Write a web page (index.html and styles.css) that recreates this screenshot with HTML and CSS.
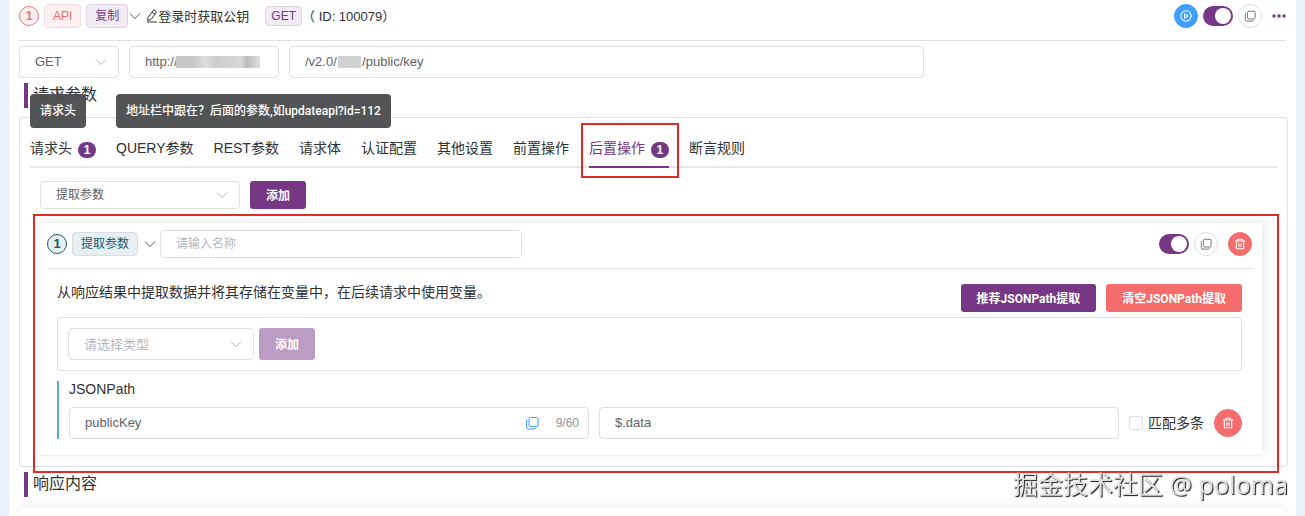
FILE: index.html
```
<!DOCTYPE html>
<html lang="zh-CN">
<head>
    <meta charset="UTF-8">
    <meta name="viewport" content="width=device-width, initial-scale=1.0">
    <title>登录时获取公钥</title>
    <link rel="stylesheet" href="styles.css">
</head>
<body>
    <!-- Shared icons -->
    <svg class="sprite" aria-hidden="true">
        <symbol id="icon-down" viewBox="0 0 12 12"><path d="M1 3.5l5 5 5-5" fill="none" stroke="currentColor"/></symbol>
        <symbol id="icon-copy" viewBox="0 0 14 14"><g fill="none" stroke="currentColor"><rect x="4" y="1.5" width="9" height="9" rx="1.5"/><path d="M2.500 3.500Q1.500 4 1.500 5v6q0 2 2 2h6q1 0 1.500-1"/></g></symbol>
        <symbol id="icon-trash" viewBox="0 0 14 14"><g fill="none" stroke="currentColor" stroke-width="1.300"><path d="M1 3.500h12M4.500 3.500V1.500h5v2M2.700 3.500v9h8.600v-9M5.700 6v4.500M8.300 6v4.500"/></g></symbol>
    </svg>

    <div class="page">
        <header class="api-header">
            <span class="step step-red">1</span>
            <span class="tag tag-red">API</span>
            <button type="button" class="tag tag-purple copy-tag">复制</button>
            <svg class="icon-arrow" viewBox="0 0 12 12"><use href="#icon-down"/></svg>
            <svg class="icon-edit" viewBox="0 0 12 14"><path d="M2 8.500L7 1.500q1-1 2 0l.7.6q1 1 .2 2L5 10.500l-3.500 1zM6 3l3 2.300M1 13h10" fill="none" stroke="currentColor"/></svg>
            <span class="api-name">登录时获取公钥</span>
            <span class="tag tag-purple tag-small">GET</span>
            <span class="api-id">（ ID: 100079）</span>

            <div class="actions">
                <button type="button" class="round round-blue" aria-label="运行">
                    <svg viewBox="0 0 14 14"><g fill="none" stroke="currentColor" stroke-width="1.200"><circle cx="7" cy="7" r="6"/><path d="M5.500 4.500v5L9.500 7z"/></g></svg>
                </button>
                <input type="checkbox" class="switch" aria-label="启用接口" checked>
                <button type="button" class="round" aria-label="复制接口"><svg><use href="#icon-copy"/></svg></button>
                <button type="button" class="more" aria-label="更多">
                    <svg viewBox="0 0 14 4"><circle cx="2" cy="2" r="1.700"/><circle cx="7" cy="2" r="1.700"/><circle cx="12" cy="2" r="1.700"/></svg>
                </button>
            </div>
        </header>

        <!-- Request address -->
        <div class="url-row">
            <div class="select method">
                <select aria-label="请求方法"><option>GET</option></select>
                <svg><use href="#icon-down"/></svg>
            </div>
            <div class="field host">
                <input type="text" aria-label="域名" value="http://">
                <span class="mask mask-host"></span>
            </div>
            <div class="field path">
                <input type="text" aria-label="路径" value="/v2.0/&nbsp;&nbsp;&nbsp;&nbsp;&nbsp;&nbsp;&nbsp;/public/key">
                <span class="mask mask-path"></span>
            </div>
        </div>

        <h2 class="section-title">请求参数</h2>

        <section class="panel">
            <nav class="tabs">
                <a href="#" class="tab">请求头<span class="badge">1</span><span class="tooltip">请求头</span></a>
                <a href="#" class="tab">QUERY参数<span class="tooltip">地址栏中跟在？后面的参数,如updateapi?id=112</span></a>
                <a href="#" class="tab">REST参数</a>
                <a href="#" class="tab">请求体</a>
                <a href="#" class="tab">认证配置</a>
                <a href="#" class="tab">其他设置</a>
                <a href="#" class="tab">前置操作</a>
                <a href="#" class="tab active">后置操作<span class="badge">1</span><span class="mark mark-tab"></span></a>
                <a href="#" class="tab">断言规则</a>
            </nav>

            <div class="add-row">
                <div class="select select-small operation">
                    <select aria-label="操作类型"><option>提取参数</option></select>
                    <svg><use href="#icon-down"/></svg>
                </div>
                <button type="button" class="btn">添加</button>
            </div>

            <!-- Extract parameter step -->
            <div class="card">
                <span class="mark mark-card"></span>
                <div class="card-header">
                    <span class="step step-teal">1</span>
                    <span class="tag tag-teal">提取参数</span>
                    <svg class="icon-arrow card-arrow"><use href="#icon-down"/></svg>
                    <div class="field field-small step-name"><input type="text" aria-label="名称" placeholder="请输入名称"></div>
                    <div class="actions">
                        <input type="checkbox" class="switch" aria-label="启用步骤" checked>
                        <button type="button" class="round" aria-label="复制步骤"><svg><use href="#icon-copy"/></svg></button>
                        <button type="button" class="round round-red step-delete" aria-label="删除步骤"><svg><use href="#icon-trash"/></svg></button>
                    </div>
                </div>

                <div class="card-body">
                    <div class="desc-row">
                        <p class="desc">从响应结果中提取数据并将其存储在变量中，在后续请求中使用变量。</p>
                        <button type="button" class="btn">推荐JSONPath提取</button>
                        <button type="button" class="btn btn-red">清空JSONPath提取</button>
                    </div>

                    <div class="type-box">
                        <div class="select type">
                            <select class="empty" aria-label="类型"><option>请选择类型</option></select>
                            <svg><use href="#icon-down"/></svg>
                        </div>
                        <button type="button" class="btn btn-large" disabled>添加</button>
                    </div>

                    <div class="extract">
                        <div class="extract-title">JSONPath</div>
                        <div class="extract-row">
                            <div class="field">
                                <input type="text" aria-label="变量名" value="publicKey">
                                <svg class="icon-link"><use href="#icon-copy"/></svg>
                                <span class="count">9/60</span>
                            </div>
                            <div class="field"><input type="text" aria-label="表达式" value="$.data"></div>
                            <label class="multi"><input type="checkbox">匹配多条</label>
                            <button type="button" class="round round-red round-large" aria-label="删除"><svg><use href="#icon-trash"/></svg></button>
                        </div>
                    </div>
                </div>
            </div>
        </section>

        <h2 class="section-title">响应内容</h2>
        <section class="response"></section>
    </div>

    <div class="watermark">掘金技术社区 @ poloma</div>
</body>
</html>
```
FILE: styles.css
```
* {
    box-sizing: border-box;
}

body {
    margin: 0;
    background-color: #eaf0f9;
    color: #303133;
    font-family: "Liberation Sans", "Noto Sans CJK SC", sans-serif;
    font-size: 14px;
}

button, input, select {
    margin: 0;
    font-family: inherit;
}

button {
    cursor: pointer;
}

.sprite {
    position: absolute;
    width: 0;
    height: 0;
}

.page {
    display: flex;
    flex-direction: column;
    min-height: 100vh;
    margin: 0 9px;
    padding: 0 8px 0 10px;
    background-color: #fff;
}

/* Header */
.api-header {
    display: flex;
    align-items: center;
    height: 41px;
    margin-right: 2px;
    padding-bottom: 9px;
    border-bottom: 1px solid #dcdfe6;
    font-size: 13px;
    white-space: nowrap;
}

.step {
    width: 20px;
    height: 20px;
    margin-right: 5px;
    border: 1px solid;
    border-radius: 50%;
    font: 700 13px/18px "Liberation Sans", sans-serif;
    text-align: center;
}

.step-red {
    color: #e57878;
    background-color: #fef0f0;
}

.step-teal {
    color: #155b70;
    background-color: #e8eff1;
}

.tag {
    height: 24px;
    padding: 0 8px;
    border: 1px solid;
    border-radius: 4px;
    font-size: 12px;
    line-height: 22px;
}

.tag-red {
    margin-right: 5px;
    color: #f56c6c;
    background-color: #fef0f0;
    border-color: #f3dcdf;
}

.tag-purple {
    color: #783887;
    background-color: #f2ebf3;
    border-color: #e0d3e4;
}

.tag-teal {
    color: #155b70;
    background-color: #e8eff1;
    border-color: #d5dfe4;
}

.tag-small {
    height: 20px;
    padding: 0 5px;
    line-height: 18px;
}

.copy-tag {
    width: 42px;
}

.icon-arrow {
    width: 12px;
    height: 12px;
    margin-left: 1px;
    color: #555;
}

.icon-edit {
    width: 12px;
    height: 14px;
    margin-left: 5px;
}

.api-name {
    margin-right: 16px;
}

.actions {
    display: flex;
    align-items: center;
    gap: 5px;
    margin-left: auto;
}

.round {
    display: flex;
    align-items: center;
    justify-content: center;
    flex: none;
    width: 24px;
    height: 24px;
    padding: 0;
    border: 1px solid #dcdfe6;
    border-radius: 50%;
    background-color: #fff;
    color: #606266;
}

.round svg {
    width: 12px;
    height: 12px;
}

.round-blue {
    border-color: #409eff;
    background-color: #409eff;
    color: #fff;
}

.round-red {
    border-color: #f56c6c;
    background-color: #f56c6c;
    color: #fff;
}

.round-large {
    width: 28px;
    height: 28px;
}

.more {
    width: 14px;
    margin-left: 5px;
    padding: 0;
    border: none;
    background: none;
}

.more svg {
    display: block;
    width: 14px;
    height: 4px;
    fill: #763884;
}

/* Toggle switch */
.switch {
    display: flex;
    justify-content: flex-end;
    width: 30px;
    height: 20px;
    padding: 2px;
    border-radius: 10px;
    background-color: #763884;
    appearance: none;
}

.switch::before {
    content: "";
    width: 16px;
    height: 16px;
    border-radius: 50%;
    background-color: #fff;
}

/* Inputs and selects */
.field, .select {
    display: flex;
    align-items: center;
    position: relative;
    height: 32px;
    border: 1px solid #dcdfe6;
    border-radius: 4px;
    background-color: #fff;
    color: #606266;
    font-size: 13px;
}

.field-small, .select-small {
    height: 28px;
    font-size: 12px;
}

.field input, .select select {
    flex: 1;
    min-width: 0;
    height: 100%;
    padding: 0 15px 2px;
    border: none;
    outline: none;
    background: none;
    color: inherit;
    font-size: inherit;
    appearance: none;
}

.field-small input, .select-small select, .select .empty {
    padding-bottom: 0;
}

.field input::placeholder {
    color: #b4b8bf;
}

.select .empty {
    color: #b4b8bf;
}

.select svg {
    position: absolute;
    right: 11px;
    width: 12px;
    height: 12px;
    color: #b4b8bf;
    pointer-events: none;
}

.url-row {
    display: flex;
    gap: 10px;
    margin-top: 5px;
}

.method {
    width: 100px;
}

.host {
    width: 150px;
}

.path {
    width: 50%;
}

/* Hidden part of the address */
.mask {
    position: absolute;
    top: 9px;
    height: 12px;
    background-color: #d0d0d0;
}

.mask-host {
    left: 46px;
    width: 84px;
    background-image: linear-gradient(90deg, #c8c8c8 22%, #dedede 35%, #cdcdcd 48%, #d8d8d8 78%, #bcbcbc 84%, #e0e0e0);
}

.mask-path {
    left: 48px;
    width: 23px;
}

.section-title {
    height: 25px;
    margin: 5px 0 9px 5px;
    padding-left: 5px;
    border-left: 4px solid #763884;
    font-size: 16px;
    font-weight: 400;
    line-height: 23px;
}

.panel {
    padding: 10px;
    border: 1px solid #dcdfe6;
    border-radius: 4px;
}

/* Tabs */
.tabs {
    display: flex;
    gap: 20px;
    height: 40px;
    border-bottom: 2px solid #e4e7ed;
}

.tab {
    display: flex;
    align-items: center;
    position: relative;
    height: 40px;
    border-bottom: 2px solid transparent;
    color: #303133;
    text-decoration: none;
    white-space: nowrap;
}

.tab.active {
    color: #763884;
    border-bottom-color: #763884;
}

.badge {
    width: 18px;
    height: 16px;
    margin: 6px 0 0 6px;
    border-radius: 8px;
    background-color: #763884;
    color: #fff;
    font: 700 12px/16px "Liberation Sans", sans-serif;
    text-align: center;
}

.tooltip {
    position: absolute;
    bottom: 100%;
    left: 0;
    padding: 0 10px;
    border-radius: 4px;
    background-color: rgba(76, 77, 78, 0.96);
    color: #fff;
    font: 500 12px/34px Roboto, "Noto Sans CJK SC", sans-serif;
}

/* Red highlight frames */
.mark {
    position: absolute;
    border: 2px solid #e02b26;
    pointer-events: none;
}

.mark-tab {
    inset: -5px -10px -12px -8px;
}

.mark-card {
    inset: -9px -17px -18px -4px;
}

.add-row {
    display: flex;
    gap: 10px;
    margin: 13px 0 0 10px;
}

.operation {
    width: 200px;
}

.btn {
    height: 28px;
    padding: 0 16px 2px;
    border: none;
    border-radius: 3px;
    background-color: #763884;
    color: #fff;
    font: 700 12px Roboto, "Noto Sans CJK SC", sans-serif;
    white-space: nowrap;
}

.btn-red {
    background-color: #f56c6c;
}

.btn-large {
    height: 32px;
}

.btn:disabled {
    background-color: #bb9cc2;
}

/* Step card */
.card {
    position: relative;
    margin: 14px 15px 0 7px;
    padding: 7px 10px 16px;
    border-bottom: 1px solid #ebeef5;
    border-radius: 4px;
    box-shadow: 4px -2px 10px rgba(0, 0, 0, 0.08);
}

.card-header {
    display: flex;
    align-items: center;
    padding-bottom: 10px;
    border-bottom: 1px solid #dcdfe6;
}

.card-arrow {
    margin: 0 4px 0 6px;
}

.step-name {
    width: 30%;
}

.step-delete {
    margin-left: 5px;
}

.card-body {
    padding: 15px 10px 0;
}

.desc-row {
    display: flex;
    align-items: flex-start;
    gap: 10px;
}

.desc {
    flex: 1;
    margin: 0;
    line-height: 16px;
}

.type-box {
    display: flex;
    gap: 5px;
    margin: 5px 0 10px;
    padding: 10px;
    border: 1px solid #dcdfe6;
    border-radius: 4px;
}

.type {
    width: 186px;
}

.extract {
    padding-left: 10px;
    border-left: 2px solid #55afc6;
}

.extract-title {
    margin-bottom: 10px;
    line-height: 16px;
}

.extract-row {
    display: flex;
    align-items: center;
    gap: 10px;
}

.extract-row .field {
    flex: 1;
}

.icon-link {
    width: 14px;
    height: 14px;
    margin-right: 17px;
    color: #409eff;
}

.count {
    margin-right: 9px;
    color: #909399;
    font-size: 12px;
}

.multi {
    display: flex;
    align-items: center;
    gap: 5px;
    line-height: 16px;
    white-space: nowrap;
}

.multi input {
    width: 14px;
    height: 14px;
    border: 1px solid #dcdfe6;
    border-radius: 2px;
    background-color: #fff;
    appearance: none;
}

.response {
    flex: 1;
    margin: 2px 2px 0 0;
    border-radius: 4px;
    box-shadow: 0 0 10px rgba(0, 0, 0, 0.1);
}

.watermark {
    position: fixed;
    right: 17px;
    bottom: 15px;
    color: #e0e0e0;
    font: 25px/34px "Noto Sans", "Noto Sans CJK SC", sans-serif;
    text-shadow: 1px 1px 1px #111;
    pointer-events: none;
}
```
